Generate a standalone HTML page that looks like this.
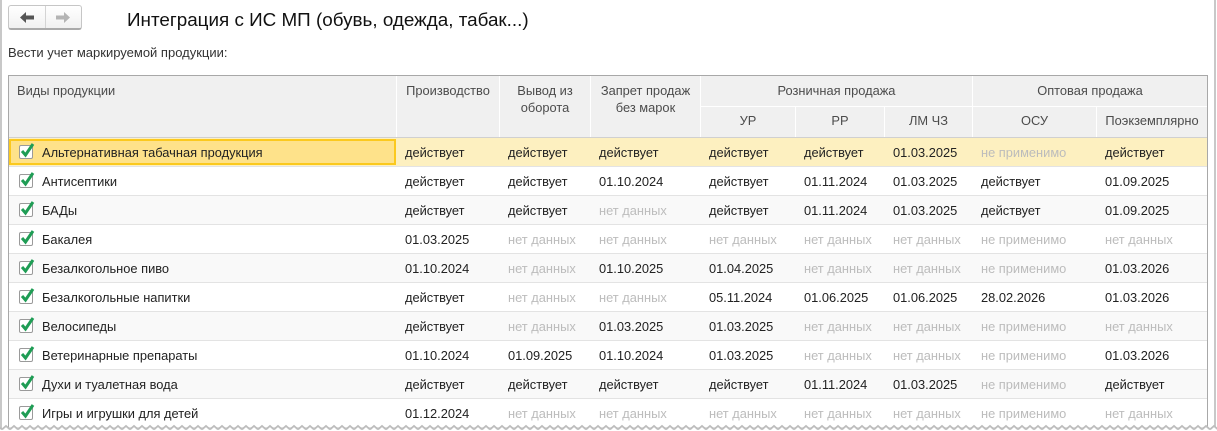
<!DOCTYPE html>
<html lang="ru"><head><meta charset="utf-8"><title>Интеграция с ИС МП</title>
<style>
html,body{margin:0;padding:0;background:#fff}
#p{position:relative;width:1217px;height:431px;overflow:hidden;background:#fff;font:12.85px/14px "Liberation Sans","Noto Sans CJK SC",sans-serif;color:#333}
#p div{position:absolute;white-space:nowrap}
.ol{left:0;top:0;width:2px;height:431px;background:#c8c8c8}
.or{left:1214px;top:0;width:2px;height:431px;background:#c8c8c8}
.nav{left:8px;top:5px;width:72px;height:22px;border:1px solid #c6c6c6;border-bottom:2px solid #aaa;border-radius:3px;background:linear-gradient(#fff,#f1f1f1);box-sizing:content-box}
.nav i{position:absolute;left:36px;top:0;width:1px;height:22px;background:#d4d4d4}
.title{left:127px;top:9px;font-size:18.85px;line-height:21px;color:#111}
.cap{left:8px;top:46px;color:#333;font-size:13px}
.tb{left:8px;top:75px;width:1200px;height:356px;box-sizing:border-box;border:1px solid #a8a8a8;border-bottom:0;background:#fff;overflow:hidden}
.h{background:#f0f0f0;color:#4c4c4c;text-align:center;box-sizing:border-box;line-height:17px;padding-top:6px}
.r{left:0;width:1198px;height:29px;border-bottom:1px solid #e3e3e3;box-sizing:border-box}
.g{background:#f9f9f9}.y{background:#fdf0c0}
.r span{position:absolute;top:8px;white-space:nowrap;color:#222}
.r .n{color:#bcbcbc}
.c1{left:396px}.c2{left:499px}.c3{left:590px}.c4{left:700px}.c5{left:795px}.c6{left:884px}.c7{left:972px}.c8{left:1096px}
.r .c0{left:33px}
.cb{position:absolute;left:10px;top:7px;width:12px;height:12px;border:1px solid #9a9a9a;border-radius:2px;background:#fff}
.ck{position:absolute;left:10px;top:3px}
.sel{left:0;top:1px;width:383px;height:22px;border:2px solid #fbc91e;background:#fee28a}
</style></head><body>
<div id="p">
<div class="ol"></div><div class="or"></div>
<div class="nav"><i></i>
<svg style="position:absolute;left:11px;top:5px" width="15" height="13"><path d="M0 6.5 6 1V4.5H14V8.5H6V12Z" fill="#555"/></svg>
<svg style="position:absolute;left:47px;top:5px" width="15" height="13"><path d="M14 6.5 8 1V4.5H0V8.5H8V12Z" fill="#b4b4b4"/></svg>
</div>
<div class="title">Интеграция с ИС МП (обувь, одежда, табак...)</div>
<div class="cap">Вести учет маркируемой продукции:</div>
<div class="tb">
<div class="h" style="left:0;top:0;width:387px;height:61px;text-align:left;padding-left:8px">Виды продукции</div>
<div class="h" style="left:388px;top:0;width:102px;height:61px">Производство</div>
<div class="h" style="left:491px;top:0;width:90px;height:61px">Вывод из<br>оборота</div>
<div class="h" style="left:582px;top:0;width:109px;height:61px">Запрет продаж<br>без марок</div>
<div class="h" style="left:692px;top:0;width:271px;height:30px">Розничная продажа</div>
<div class="h" style="left:964px;top:0;width:234px;height:30px">Оптовая продажа</div>
<div class="h" style="left:692px;top:31px;width:94px;height:30px;padding-top:5px">УР</div>
<div class="h" style="left:787px;top:31px;width:88px;height:30px;padding-top:5px">РР</div>
<div class="h" style="left:876px;top:31px;width:87px;height:30px;padding-top:5px">ЛМ ЧЗ</div>
<div class="h" style="left:964px;top:31px;width:123px;height:30px;padding-top:5px">ОСУ</div>
<div class="h" style="left:1088px;top:31px;width:110px;height:30px;padding-top:5px">Поэкземплярно</div>
<div style="left:0;top:61px;width:1198px;height:1px;background:#d0d0d0"></div>

<div class="r y" style="top:62px"><div class="sel"></div><i class="cb"></i><svg class="ck" width="16" height="17"><path d="M3 10 6.5 14 14 3" fill="none" stroke="#1f9d55" stroke-width="3"/></svg><span class="c0">Альтернативная табачная продукция</span><span class="c1">действует</span><span class="c2">действует</span><span class="c3">действует</span><span class="c4">действует</span><span class="c5">действует</span><span class="c6">01.03.2025</span><span class="c7 n">не применимо</span><span class="c8">действует</span></div>

<div class="r" style="top:91px"><i class="cb"></i><svg class="ck" width="16" height="17"><path d="M3 10 6.5 14 14 3" fill="none" stroke="#1f9d55" stroke-width="3"/></svg><span class="c0">Антисептики</span><span class="c1">действует</span><span class="c2">действует</span><span class="c3">01.10.2024</span><span class="c4">действует</span><span class="c5">01.11.2024</span><span class="c6">01.03.2025</span><span class="c7">действует</span><span class="c8">01.09.2025</span></div>

<div class="r g" style="top:120px"><i class="cb"></i><svg class="ck" width="16" height="17"><path d="M3 10 6.5 14 14 3" fill="none" stroke="#1f9d55" stroke-width="3"/></svg><span class="c0">БАДы</span><span class="c1">действует</span><span class="c2">действует</span><span class="c3 n">нет данных</span><span class="c4">действует</span><span class="c5">01.11.2024</span><span class="c6">01.03.2025</span><span class="c7">действует</span><span class="c8">01.09.2025</span></div>

<div class="r" style="top:149px"><i class="cb"></i><svg class="ck" width="16" height="17"><path d="M3 10 6.5 14 14 3" fill="none" stroke="#1f9d55" stroke-width="3"/></svg><span class="c0">Бакалея</span><span class="c1">01.03.2025</span><span class="c2 n">нет данных</span><span class="c3 n">нет данных</span><span class="c4 n">нет данных</span><span class="c5 n">нет данных</span><span class="c6 n">нет данных</span><span class="c7 n">не применимо</span><span class="c8 n">нет данных</span></div>

<div class="r g" style="top:178px"><i class="cb"></i><svg class="ck" width="16" height="17"><path d="M3 10 6.5 14 14 3" fill="none" stroke="#1f9d55" stroke-width="3"/></svg><span class="c0">Безалкогольное пиво</span><span class="c1">01.10.2024</span><span class="c2 n">нет данных</span><span class="c3">01.10.2025</span><span class="c4">01.04.2025</span><span class="c5 n">нет данных</span><span class="c6 n">нет данных</span><span class="c7 n">не применимо</span><span class="c8">01.03.2026</span></div>

<div class="r" style="top:207px"><i class="cb"></i><svg class="ck" width="16" height="17"><path d="M3 10 6.5 14 14 3" fill="none" stroke="#1f9d55" stroke-width="3"/></svg><span class="c0">Безалкогольные напитки</span><span class="c1">действует</span><span class="c2 n">нет данных</span><span class="c3 n">нет данных</span><span class="c4">05.11.2024</span><span class="c5">01.06.2025</span><span class="c6">01.06.2025</span><span class="c7">28.02.2026</span><span class="c8">01.03.2026</span></div>

<div class="r g" style="top:236px"><i class="cb"></i><svg class="ck" width="16" height="17"><path d="M3 10 6.5 14 14 3" fill="none" stroke="#1f9d55" stroke-width="3"/></svg><span class="c0">Велосипеды</span><span class="c1">действует</span><span class="c2 n">нет данных</span><span class="c3">01.03.2025</span><span class="c4">01.03.2025</span><span class="c5 n">нет данных</span><span class="c6 n">нет данных</span><span class="c7 n">не применимо</span><span class="c8 n">нет данных</span></div>

<div class="r" style="top:265px"><i class="cb"></i><svg class="ck" width="16" height="17"><path d="M3 10 6.5 14 14 3" fill="none" stroke="#1f9d55" stroke-width="3"/></svg><span class="c0">Ветеринарные препараты</span><span class="c1">01.10.2024</span><span class="c2">01.09.2025</span><span class="c3">01.10.2024</span><span class="c4">01.03.2025</span><span class="c5 n">нет данных</span><span class="c6 n">нет данных</span><span class="c7 n">не применимо</span><span class="c8">01.03.2026</span></div>

<div class="r g" style="top:294px"><i class="cb"></i><svg class="ck" width="16" height="17"><path d="M3 10 6.5 14 14 3" fill="none" stroke="#1f9d55" stroke-width="3"/></svg><span class="c0">Духи и туалетная вода</span><span class="c1">действует</span><span class="c2">действует</span><span class="c3">действует</span><span class="c4">действует</span><span class="c5">01.11.2024</span><span class="c6">01.03.2025</span><span class="c7 n">не применимо</span><span class="c8">действует</span></div>

<div class="r" style="top:323px"><i class="cb"></i><svg class="ck" width="16" height="17"><path d="M3 10 6.5 14 14 3" fill="none" stroke="#1f9d55" stroke-width="3"/></svg><span class="c0">Игры и игрушки для детей</span><span class="c1">01.12.2024</span><span class="c2 n">нет данных</span><span class="c3 n">нет данных</span><span class="c4 n">нет данных</span><span class="c5 n">нет данных</span><span class="c6 n">нет данных</span><span class="c7 n">не применимо</span><span class="c8 n">нет данных</span></div>
</div>
<svg style="position:absolute;left:0;top:421px" width="1217" height="10"><defs><pattern id="z" width="8" height="10" patternUnits="userSpaceOnUse" patternTransform="translate(2 0)"><path d="M0 8.5 4 5 8 8.5V10H0Z" fill="#fff"/><path d="M0 8.5 4 5 8 8.5" fill="none" stroke="#bdbdbd" stroke-width="1.8"/></pattern></defs><rect width="1217" height="10" fill="url(#z)"/></svg>
</div>
</body></html>
